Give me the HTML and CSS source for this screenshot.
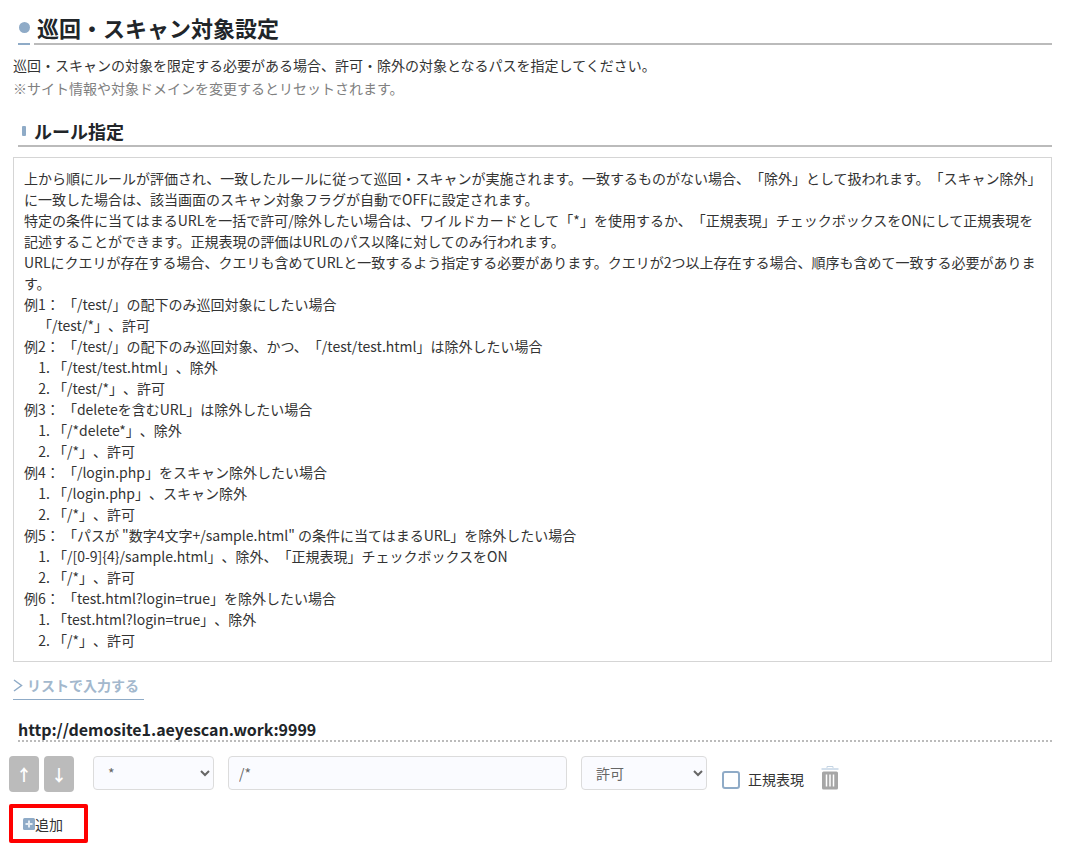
FILE: index.html
```html
<!DOCTYPE html>
<html lang="ja">
<head>
<meta charset="utf-8">
<title>巡回・スキャン対象設定</title>
<link rel="stylesheet" href="styles.css">
</head>
<body>
<main class="page">
  <div class="title-row">
    <span class="title-mark"><span class="title-dot"></span></span>
    <h2 class="title">巡回・スキャン対象設定</h2>
  </div>
  <p class="lead">巡回・スキャンの対象を限定する必要がある場合、許可・除外の対象となるパスを指定してください。</p>
  <p class="note">※サイト情報や対象ドメインを変更するとリセットされます。</p>

  <div class="sub-row">
    <span class="sub-bar"></span>
    <h3 class="sub-title">ルール指定</h3>
  </div>

  <div class="help">
    <div>上から順にルールが評価され、一致したルールに従って巡回・スキャンが実施されます。一致するものがない場合、「除外」として扱われます。「スキャン除外」に一致した場合は、該当画面のスキャン対象フラグが自動でOFFに設定されます。</div>
    <div>特定の条件に当てはまるURLを一括で許可/除外したい場合は、ワイルドカードとして「*」を使用するか、「正規表現」チェックボックスをONにして正規表現を記述することができます。正規表現の評価はURLのパス以降に対してのみ行われます。</div>
    <div>URLにクエリが存在する場合、クエリも含めてURLと一致するよう指定する必要があります。クエリが2つ以上存在する場合、順序も含めて一致する必要があります。</div>
    <div>例1： 「/test/」の配下のみ巡回対象にしたい場合</div>
    <div class="indent">「/test/*」、許可</div>
    <div>例2： 「/test/」の配下のみ巡回対象、かつ、「/test/test.html」は除外したい場合</div>
    <ol class="steps"><li>「/test/test.html」、除外</li><li>「/test/*」、許可</li></ol>
    <div>例3： 「deleteを含むURL」は除外したい場合</div>
    <ol class="steps"><li>「/*delete*」、除外</li><li>「/*」、許可</li></ol>
    <div>例4： 「/login.php」をスキャン除外したい場合</div>
    <ol class="steps"><li>「/login.php」、スキャン除外</li><li>「/*」、許可</li></ol>
    <div>例5： 「パスが "数字4文字+/sample.html" の条件に当てはまるURL」を除外したい場合</div>
    <ol class="steps"><li>「/[0-9]{4}/sample.html」、除外、「正規表現」チェックボックスをON</li><li>「/*」、許可</li></ol>
    <div>例6： 「test.html?login=true」を除外したい場合</div>
    <ol class="steps"><li>「test.html?login=true」、除外</li><li>「/*」、許可</li></ol>
  </div>

  <div class="list-link-row">
    <a class="list-link" href="#">
      <svg class="chev" width="10" height="13" viewBox="0 0 10 13"><path d="M1 1 8.500 6.500 1 12" fill="none" stroke="#8fabc7" stroke-width="1.500"/></svg>リストで入力する
    </a>
  </div>

  <div class="domain">http://demosite1.aeyescan.work:9999</div>

  <div class="rule-row">
    <div class="move-btns">
      <button class="move" type="button">↑</button>
      <button class="move" type="button">↓</button>
    </div>
    <select class="field sel-path"><option>*</option></select>
    <input class="field path-input" type="text" value="/*">
    <select class="field sel-action"><option>許可</option></select>
    <label class="regex"><input class="check" type="checkbox"><span class="box"></span>正規表現</label>
    <svg class="trash" width="18" height="24" viewBox="0 0 18 24">
      <path d="M0.500 3h17" stroke="#c5d5e4" stroke-width="1.500"/>
      <path d="M6 2V0.500h6V2" fill="none" stroke="#c5d5e4" stroke-width="1"/>
      <rect x="1" y="5.500" width="16" height="18" rx="1.500" fill="#a6a6a6"/>
      <path d="M5.500 8.500v12M9 8.500v12M12.500 8.500v12" stroke="#fff" stroke-width="1.500"/>
    </svg>
  </div>

  <button class="add" type="button">
    <svg class="plus" width="12" height="12" viewBox="0 0 12 12"><rect width="12" height="12" rx="1.500" fill="#8fabc7"/><path d="M6 2.500v7M2.500 6h7" stroke="#e6edf3" stroke-width="2"/></svg>追加
  </button>
</main>
</body>
</html>
```

FILE: styles.css
```css
* { box-sizing: border-box; }
html, body { margin: 0; background: #fff; }
body {
  font-family: "Noto Sans CJK JP", "Noto Sans", sans-serif;
  font-size: 14px;
  line-height: 21px;
  color: #333;
  overflow: hidden;
  text-spacing-trim: space-all;
}
.page { width: 1066px; height: 850px; padding: 0 14px 0 13px; }

.title-row { display: flex; padding: 11px 0 0 5px; align-items: stretch; gap: 4px; }
.title-mark { width: 12px; border-bottom: 2px solid #8fabc7; display: flex; align-items: center; justify-content: center; }
.title-dot { width: 11px; height: 11px; border-radius: 50%; background: #8fabc7; }
.title {
  flex: 1; margin: 0; font-size: 22px; line-height: 32px; font-weight: 700;
  border-bottom: 2px solid #bbb; padding-left: 3px; color: #212529;
}
.lead { margin: 10px 0 0; }
.note { margin: 2px 0 0; color: #808080; }

.sub-row {
  display: flex; align-items: center; margin: 18px 0 0 5px; height: 30px;
  border-bottom: 2px solid #bbb;
}
.sub-bar { width: 4px; height: 10px; background: #8fabc7; border-radius: 1px; margin: 0 8px 0 4px; }
.sub-title { margin: 0; font-size: 18px; line-height: 26px; font-weight: 700; color: #212529; }

.help {
  margin-top: 10px; border: 1px solid #d5d5d5; padding: 10px 6px 10px 10px; height: 505px;
}
.indent { padding-left: 14px; }
.steps { margin: 0; padding-left: 29px; }

.list-link-row { margin-top: 13px; display: flex; }
.list-link {
  display: inline-flex; align-items: center; gap: 4px;
  color: #a3b8cd; font-weight: 700; text-decoration: none;
  border-bottom: 1px solid #8fabc7; padding-bottom: 3px; width: 131px;
}
.chev { flex: none; }

.domain {
  margin: 18px 0 0 5px; font-size: 16px; line-height: 22px; font-weight: 700; color: #212529;
  letter-spacing: -0.05px;
  border-bottom: 2px dotted #bbb;
}

.rule-row { display: flex; align-items: flex-start; margin: 14px 0 0 -4px; }
.move-btns { display: flex; gap: 5px; margin-right: 19px; }
.move {
  width: 30px; height: 36px; border: 0; border-radius: 4px; background: #bbb; color: #fff;
  font: 700 16px/36px "Noto Sans CJK JP", sans-serif; padding: 0;
}
.field {
  height: 34px; border: 1px solid #dcdcdc; border-radius: 4px; background: #fafbff;
  font: 14px "Noto Sans CJK JP", sans-serif; color: #666; padding: 0 10px;
}
.sel-path { width: 121px; margin-right: 14px; }
.path-input { width: 339px; margin-right: 14px; }
.sel-action { width: 126px; margin-right: 15px; }
.regex { display: flex; align-items: center; margin-top: 13px; gap: 8px; color: #333; }
.check { position: absolute; opacity: 0; width: 0; height: 0; margin: 0; }
.box { width: 18px; height: 18px; border: 2px solid #8fabc7; border-radius: 3px; background: #fff; }
.trash { margin: 10px 0 0 17px; }

.add {
  display: flex; align-items: center; width: 79px; height: 39px; margin: 12px 0 0 -4px;
  border: 4px solid #f00; border-radius: 2px; background: #fff; padding: 0 0 0 10px;
  font: 14px "Noto Sans CJK JP", sans-serif; color: #333;
}
.plus { flex: none; }
```
